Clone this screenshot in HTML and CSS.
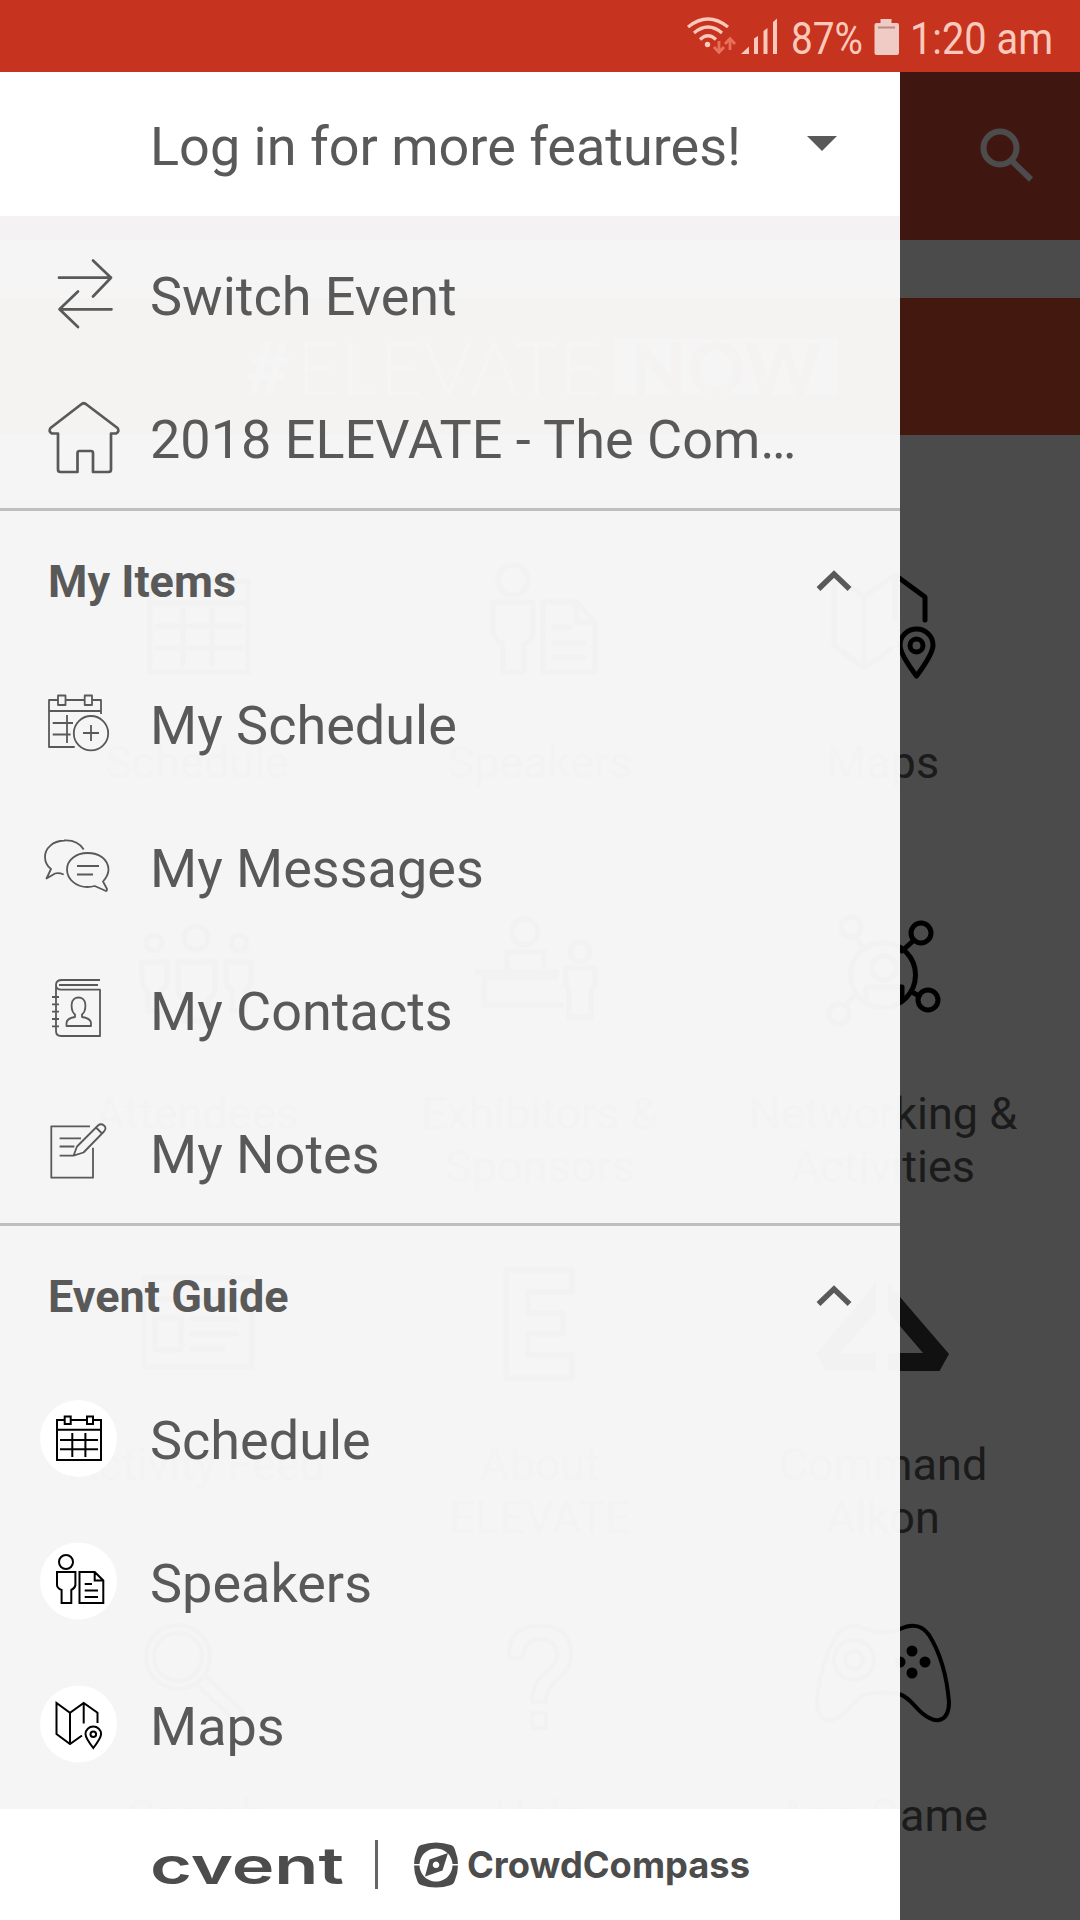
FILE: index.html
```html
<!DOCTYPE html>
<html lang="en">
<head>
    <meta charset="UTF-8">
    <meta name="viewport" content="width=device-width, initial-scale=1.0">
    <title>2018 ELEVATE</title>
    <link rel="stylesheet" href="styles.css">
</head>
<body>
    <header class="status-bar">
        <svg class="status-signal" width="92" height="72" viewBox="0 0 92 72">
            <g fill="none" stroke="#fbc8bc" stroke-width="3.2">
                <path d="M1 27Q21 11 41 27"/>
                <path d="M7 33Q21 21 35 33"/>
                <path d="M13 39.500Q21 32 29 39.500"/>
            </g>
            <circle cx="20.500" cy="44.500" r="2.700" fill="#fbc8bc"/>
            <path d="M32 41v11M27 47l5 5.500 5-5.500M43 50V39M38 44l5-5.500 5 5.500" fill="none" stroke="#e8705c" stroke-width="2.800"/>
            <path d="M54 54l8-7.500V54zM67 54V38.500l4-2.500v18zM76.500 54V31l4-3v26zM86 54V22l4-3.500V54z" fill="#fbc8bc"/>
        </svg>
        <svg class="status-percent" width="74" height="72" viewBox="0 0 74 72">
            <text x="1" y="54" textLength="72" lengthAdjust="spacingAndGlyphs">87%</text>
        </svg>
        <svg class="status-battery" width="25" height="72" viewBox="0 0 25 72">
            <path d="M6.500 19h11v4H23q2 0 2 2v28q0 2-2 2H2.500q-2 0-2-2V25q0-2 2-2h4z" fill="#f0cac4"/>
            <path d="M4 27.500h17" stroke="#b98a82" stroke-width="2"/>
        </svg>
        <svg class="status-time" width="146" height="72" viewBox="0 0 146 72">
            <text x="1" y="54" textLength="143" lengthAdjust="spacingAndGlyphs">1:20 am</text>
        </svg>
    </header>

    <div class="app">
        <div class="toolbar">
            <svg width="60" height="60" viewBox="0 0 60 60" fill="none" stroke="#fff" stroke-width="6">
                <circle cx="24" cy="22" r="16.500"/>
                <path d="M37 36l18 17.500"/>
            </svg>
        </div>

        <div class="banner">
            <em>#</em><span class="banner-light">ELEVATE</span><strong>NOW</strong>
        </div>

        <div class="tiles">
            <div class="tile">
                <svg class="tile-icon" viewBox="0 0 140 140">
                    <path d="M36 30H23v91h98V30h-13M49 30h45M23 52h98M36 22h12v14H36zM95 22h12v14H95zM56 59v54M85 59v54M30 75h83M30 97h83"/>
                </svg>
                <p>Schedule</p>
            </div>
            <div class="tile">
                <svg class="tile-icon" viewBox="0 0 140 140">
                    <circle cx="43" cy="29" r="15"/>
                    <path d="M23 51h40v30q0 8-9 12v28H33V93q-9-4-10-12zM73 51h33l19 20v50H73zM106 51v20h19M84 76h16M84 92h30M84 106h30"/>
                </svg>
                <p>Speakers</p>
            </div>
            <div class="tile">
                <svg class="tile-icon" viewBox="0 0 140 140">
                    <path d="M78 98L51 117 21 94V24L51 46 82 24 112 46V69M51 46V117M82 24V68"/>
                    <path d="M103.500 125Q87 103 87 94a16.500 16 0 0 1 33 0Q120 103 103.500 125z"/>
                    <circle cx="103.500" cy="94.500" r="6.500"/>
                </svg>
                <p>Maps</p>
            </div>

            <div class="tile">
                <svg class="tile-icon" viewBox="0 0 140 140">
                    <circle cx="69" cy="36" r="12"/><circle cx="27" cy="41" r="8"/><circle cx="112" cy="41" r="8"/>
                    <path d="M51 60h37v27q0 8-7 10v22H57V97q-6-2-6-10zM15 60h25v17q0 9-6 11v21H21V88q-6-2-6-11zM99 60h25v17q0 9-6 11v21h-13V88q-6-2-6-11z"/>
                </svg>
                <p>Attendees</p>
            </div>
            <div class="tile">
                <svg class="tile-icon" viewBox="0 0 140 140">
                    <circle cx="55" cy="30" r="13"/><circle cx="110" cy="50" r="10"/>
                    <path d="M37 68V50h37v18M7 70h79v5H14v28h77M96 66h29v16l-4 8v25H99V90l-3-8z"/>
                </svg>
                <p>Exhibitors &amp; Sponsors</p>
            </div>
            <div class="tile">
                <svg class="tile-icon" viewBox="0 0 140 140">
                    <circle cx="70" cy="73" r="32.500"/><circle cx="71" cy="66" r="12"/>
                    <circle cx="108" cy="31" r="10"/><circle cx="115" cy="98" r="10"/>
                    <circle cx="38" cy="25" r="10"/><circle cx="26" cy="112" r="10"/>
                    <path d="M100 39L89 49M106 94l-7-4M43 34l8 13M32 104l9-10M53 98V85h36v14"/>
                </svg>
                <p>Networking &amp; Activities</p>
            </div>

            <div class="tile">
                <svg class="tile-icon" viewBox="0 0 140 140">
                    <path d="M17 25h108v89H17zM17 46h108M28 65h26v32H28zM65 66h44M65 81h44M65 96h31"/>
                </svg>
                <p>Activity Feed</p>
            </div>
            <div class="tile">
                <svg class="tile-icon" viewBox="0 0 140 140">
                    <path d="M36 17h66v22H58v21h35v21H58v21h44v23H36z"/>
                </svg>
                <p>About ELEVATE</p>
            </div>
            <div class="tile">
                <svg class="tile-icon tile-icon-solid" viewBox="0 0 140 140">
                    <path d="M75 30L136 101 126.500 118H75V100H110L75 59zM63 30V59L27 100H63V118H13L3 101z"/>
                </svg>
                <p>Command Alkon</p>
            </div>

            <div class="tile">
                <svg class="tile-icon tile-icon-thin" viewBox="0 0 140 140">
                    <circle cx="51" cy="53" r="32"/><circle cx="51" cy="53" r="24"/>
                    <path d="M69 80l36 34q5 4 9 0t0-9L79 73"/>
                </svg>
                <p>Search</p>
            </div>
            <div class="tile">
                <svg class="tile-icon tile-icon-thin" viewBox="0 0 140 140">
                    <path d="M39 54Q38 22 70 22T101 52Q101 65 88 75 76 84 76 98H62Q62 78 77 67 87 60 87 51 86 35 70 35T53 54zM62 109h14v15H62z"/>
                </svg>
                <p>Help</p>
            </div>
            <div class="tile">
                <svg class="tile-icon tile-icon-thin" viewBox="0 0 140 140">
                    <path d="M70 28Q80 29 87 25C100 19 109 21 116 31 128 50 134 74 136 98 136 118 123 121 109 109 101 102 95 92 86 90 75 88 65 88 54 90 45 92 39 102 31 109 17 121 4 118 4 98 6 74 12 50 24 31 31 21 40 19 53 25Q60 29 70 28z"/>
                    <circle cx="41" cy="56" r="20"/><circle cx="41" cy="56" r="9"/>
                    <g class="pad-buttons">
                        <circle cx="99" cy="47" r="5.500"/><circle cx="99" cy="69" r="5.500"/>
                        <circle cx="112" cy="58" r="5.500"/><circle cx="87" cy="58" r="5.500"/>
                    </g>
                </svg>
                <p>App Game</p>
            </div>
        </div>

        <div class="scrim"></div>

        <nav class="drawer">
            <div class="drawer-login">
                <span>Log in for more features!</span>
                <svg width="30" height="15" viewBox="0 0 30 15"><path d="M0 0h30L15 15z" fill="#595959"/></svg>
            </div>

            <div class="drawer-list">
                <a class="row">
                    <svg class="row-icon row-icon-bold" viewBox="0 0 90 85"><path d="M23 23.700H75M57 6.500L75 23.700 57 42.500M75.500 55.300H23.500M42 37.500L23.500 55.300 42 73"/></svg>
                    <span>Switch Event</span>
                </a>
                <a class="row row-divider">
                    <svg class="row-icon row-icon-bold" viewBox="0 0 90 85"><path d="M45 7.500Q47.800 5 50.500 7.500L81.500 31Q84 34.500 80 36.500H75V72.500Q75 75 72.500 75H57V56Q57 54 55 54H43.500Q41.500 54 41.500 56V75H24.500Q22 75 22 72.500V36.500H16Q12 34.500 14.500 31Z"/></svg>
                    <span>2018 ELEVATE - The Community Conference</span>
                </a>

                <div class="row row-heading">
                    <span>My Items</span>
                    <svg class="chevron" viewBox="0 0 36 24"><path d="M2.500 19L18 4 33.500 19"/></svg>
                </div>
                <a class="row">
                    <svg class="row-icon" viewBox="0 0 90 85">
                        <path d="M22 17H13V64H38.700M29.500 17H48.700M56 17H65V31M13 28H65M22 12.500h7.500V22H22zM48.700 12.500h7.300V22h-7.300zM31 32V60M16.700 40H37M16.700 51.500H34.600M47 50h16M55 42v16"/>
                        <circle cx="55" cy="50.200" r="17.200"/>
                    </svg>
                    <span>My Schedule</span>
                </a>
                <a class="row">
                    <svg class="row-icon" viewBox="0 0 90 85">
                        <path d="M47.700 23.500C43 16 35 14 28 14.500 17 15 9 22 9 31 9 36 11 40 15 43L10.500 52.500 19 47.500Q23 46.500 27.700 48.500M41 40H63M41 48.500H57"/>
                        <path d="M67 55.500C71 51 72.500 47 72.500 43.500 72 33 63 27 51.500 27S31 34 31 43.500 40 61 51.500 61Q55 61 58.700 60L70 65Q71 65 71 63z"/>
                    </svg>
                    <span>My Messages</span>
                </a>
                <a class="row">
                    <svg class="row-icon" viewBox="0 0 90 85">
                        <path d="M64 11H26Q20 11 20 16V62Q20 67 25 67H64V20.700H25Q20 20.500 20 16M62 16H23M16 28h7M16 35.300h7M16 42.700h7M16 50h7M16 57.300h7"/>
                        <path d="M39 45.500C35 42 35.500 38 35.700 35 36 31 39 28.500 42.500 28.500S49 31 49.300 35C49.500 38 50 42 46 45.500V48Q55 49.500 55 54V57H30.500V54Q30.500 49.500 39 48z"/>
                    </svg>
                    <span>My Contacts</span>
                </a>
                <a class="row row-divider">
                    <svg class="row-icon" viewBox="0 0 90 85">
                        <path d="M54 14.300H15.300V65.700H57V35.700M23.600 26.300H45M23.600 34.500H38.400M23.600 43.700H37.500L41 34.500 62 13.500Q65 11 68 13.500T68 19.500L47.500 40.500 37.500 43.700M60 15.500l6 6"/>
                    </svg>
                    <span>My Notes</span>
                </a>

                <div class="row row-heading">
                    <span>Event Guide</span>
                    <svg class="chevron" viewBox="0 0 36 24"><path d="M2.500 19L18 4 33.500 19"/></svg>
                </div>
                <a class="row">
                    <svg class="row-icon row-icon-round" viewBox="0 0 90 85">
                        <circle class="disc" cx="42.500" cy="40.500" r="38.500"/>
                        <path d="M28.700 22H21V62H65V22H57M34.600 22H51M21 31.700H65M28.700 18.500h6V26h-6zM51 18.500h6V26h-6zM36.300 35V59M49.400 35V59M24 42H62M24 51.300H62"/>
                    </svg>
                    <span>Schedule</span>
                </a>
                <a class="row">
                    <svg class="row-icon row-icon-round" viewBox="0 0 90 85">
                        <circle class="disc" cx="42.500" cy="40" r="38.500"/>
                        <circle cx="30" cy="21" r="7"/>
                        <path d="M21 31H39.400V44Q39 47 35.300 49V62H25.600V49Q21 47 21 44zM43.500 31H58.700L67.300 39.500V62H43.500zM58.700 31V39.500H67.300M48.700 43H56M48.700 49.500H62M48.700 56H62"/>
                    </svg>
                    <span>Speakers</span>
                </a>
                <a class="row">
                    <svg class="row-icon row-icon-round" viewBox="0 0 90 85">
                        <circle class="disc" cx="42.500" cy="40" r="38.500"/>
                        <path d="M46 51.500L34 60 20.500 50V19L34 28.700 47.700 19 61.500 28.700V39M34 28.700V60M47.700 19V39.500"/>
                        <path d="M57.300 64Q49.500 54 49.500 50a7.800 7.500 0 0 1 15.600 0Q65 54 57.300 64z"/>
                        <circle cx="57.300" cy="50.300" r="2.800"/>
                    </svg>
                    <span>Maps</span>
                </a>
            </div>

            <footer class="drawer-footer">
                <svg class="brand-cvent" width="194" height="60" viewBox="0 0 194 60">
                    <text x="0" y="48.500" textLength="194" lengthAdjust="spacingAndGlyphs">cvent</text>
                </svg>
                <i class="brand-line"></i>
                <svg class="brand-compass" width="46" height="46" viewBox="0 0 46 46">
                    <path fill="#4c4c4c" fill-rule="evenodd" d="M8 3Q23-2 38 3 41 4 42 8 48 23 42 38 41 42 38 43 23 48 8 43 5 42 4 38-2 23 4 8 5 4 8 3zM23 6.500a16.500 16.500 0 1 0 .01 0z"/>
                    <path fill="#fff" d="M0 22h7v1.500H0zM39 22h7v1.500h-7z"/>
                    <path fill="#4c4c4c" fill-rule="evenodd" d="M35 11L29.500 28.500 12 34.500 16.500 17.500zM23 19.500a3.300 3.300 0 1 0 .01 0z"/>
                </svg>
                <svg class="brand-crowd" width="283" height="60" viewBox="0 0 283 60">
                    <text x="0" y="43" textLength="283" lengthAdjust="spacingAndGlyphs">CrowdCompass</text>
                </svg>
            </footer>
        </nav>
    </div>
</body>
</html>
```
FILE: styles.css
```css
* {
    box-sizing: border-box;
}

body {
    margin: 0;
    width: 1080px;
    height: 1920px;
    overflow: hidden;
    font-family: Roboto, 'Liberation Sans', sans-serif;
    background: #fff;
}

p {
    margin: 0;
}

svg {
    display: block;
    flex: none;
}

/* status bar */
.status-bar {
    display: flex;
    justify-content: flex-end;
    height: 72px;
    padding-right: 25px;
    background: #c6331e;
}

.status-bar text {
    font-size: 45px;
    fill: #fbc8bc;
}

.status-percent {
    margin-left: 11px;
}

.status-battery {
    margin-left: 10px;
}

.status-time {
    margin-left: 10px;
}

/* page behind the drawer */
.app {
    position: relative;
    height: 1848px;
    overflow: hidden;
    background: #fafafa;
}

.toolbar {
    display: flex;
    justify-content: flex-end;
    align-items: center;
    height: 168px;
    padding-right: 44px;
    background: #d64a3a;
}

.banner {
    display: flex;
    justify-content: center;
    align-items: center;
    height: 137px;
    margin-top: 58px;
    padding-left: 4px;
    background: #e05033;
    color: #fff;
    font-family: Lato, sans-serif;
    font-size: 73px;
    line-height: 56px;
}

.banner em {
    font-weight: 700;
}

.banner-light {
    margin-left: 8px;
    font-weight: 300;
    letter-spacing: 2px;
}

.banner strong {
    margin-left: 10px;
    padding: 0 16px;
    background: #fff;
    color: #e05033;
    font-weight: 900;
}

.tiles {
    display: grid;
    grid-template-columns: repeat(3, 343px);
    grid-auto-rows: 351px;
    justify-content: center;
    padding-top: 116px;
}

.tile {
    display: flex;
    flex-direction: column;
    align-items: center;
    gap: 45px;
}

.tile p {
    width: 280px;
    color: #5d5d5d;
    font-size: 45px;
    line-height: 53px;
    text-align: center;
}

.tile-icon {
    width: 140px;
    height: 140px;
    fill: none;
    stroke: #000;
    stroke-width: 5;
    stroke-linecap: round;
    stroke-linejoin: round;
}

.tile-icon-solid {
    fill: #393939;
    stroke: none;
}

.tile-icon-thin {
    stroke-width: 4;
}

.pad-buttons {
    fill: #000;
    stroke: none;
}

.scrim {
    position: absolute;
    inset: 0;
    background: rgba(0, 0, 0, 0.7);
}

/* drawer */
.drawer {
    position: absolute;
    top: 0;
    left: 0;
    display: flex;
    flex-direction: column;
    width: 900px;
    height: 100%;
    color: #595959;
    font-size: 54px;
}

.drawer-login {
    display: flex;
    justify-content: space-between;
    align-items: center;
    height: 144px;
    padding: 4px 63px 0 150px;
    background: #fff;
}

.drawer-login svg {
    margin-bottom: 5px;
}

.drawer-list {
    height: 1593px;
    padding-top: 9px;
    background: rgba(252, 252, 252, 0.96);
}

.row {
    display: flex;
    align-items: center;
    height: 143px;
    padding: 0 100px 0 36px;
}

.row span {
    padding-bottom: 1px;
    overflow: hidden;
    white-space: nowrap;
    text-overflow: ellipsis;
}

.row-icon {
    width: 90px;
    height: 85px;
    margin-right: 24px;
    fill: none;
    stroke: #595959;
    stroke-width: 1.8;
    stroke-linejoin: round;
}

.row-icon-bold {
    stroke-width: 2.7;
    stroke-linecap: round;
}

.row-icon-round {
    stroke: #000;
    stroke-width: 2;
    stroke-linejoin: miter;
}

.disc {
    fill: #fff;
    stroke: none;
}

.row-divider {
    box-shadow: inset 0 -3px #bfbfbf;
}

.row-heading {
    justify-content: space-between;
    padding: 0 48px 2px;
    font-size: 45px;
    font-weight: 700;
}

.chevron {
    width: 36px;
    height: 24px;
    fill: none;
    stroke: #595959;
    stroke-width: 5.5;
}

.drawer-footer {
    display: flex;
    align-items: center;
    height: 111px;
    padding-left: 150px;
    background: #fff;
}

.drawer-footer text {
    font-family: Inter, sans-serif;
    fill: #4c4c4c;
}

.brand-cvent text {
    font-size: 51px;
    font-weight: 600;
}

.brand-line {
    width: 3px;
    height: 49px;
    margin-left: 31px;
    background: #666;
}

.brand-compass {
    margin-left: 35px;
}

.brand-crowd {
    margin-left: 8px;
}

.brand-crowd text {
    font-size: 37px;
    font-weight: 700;
}
```
